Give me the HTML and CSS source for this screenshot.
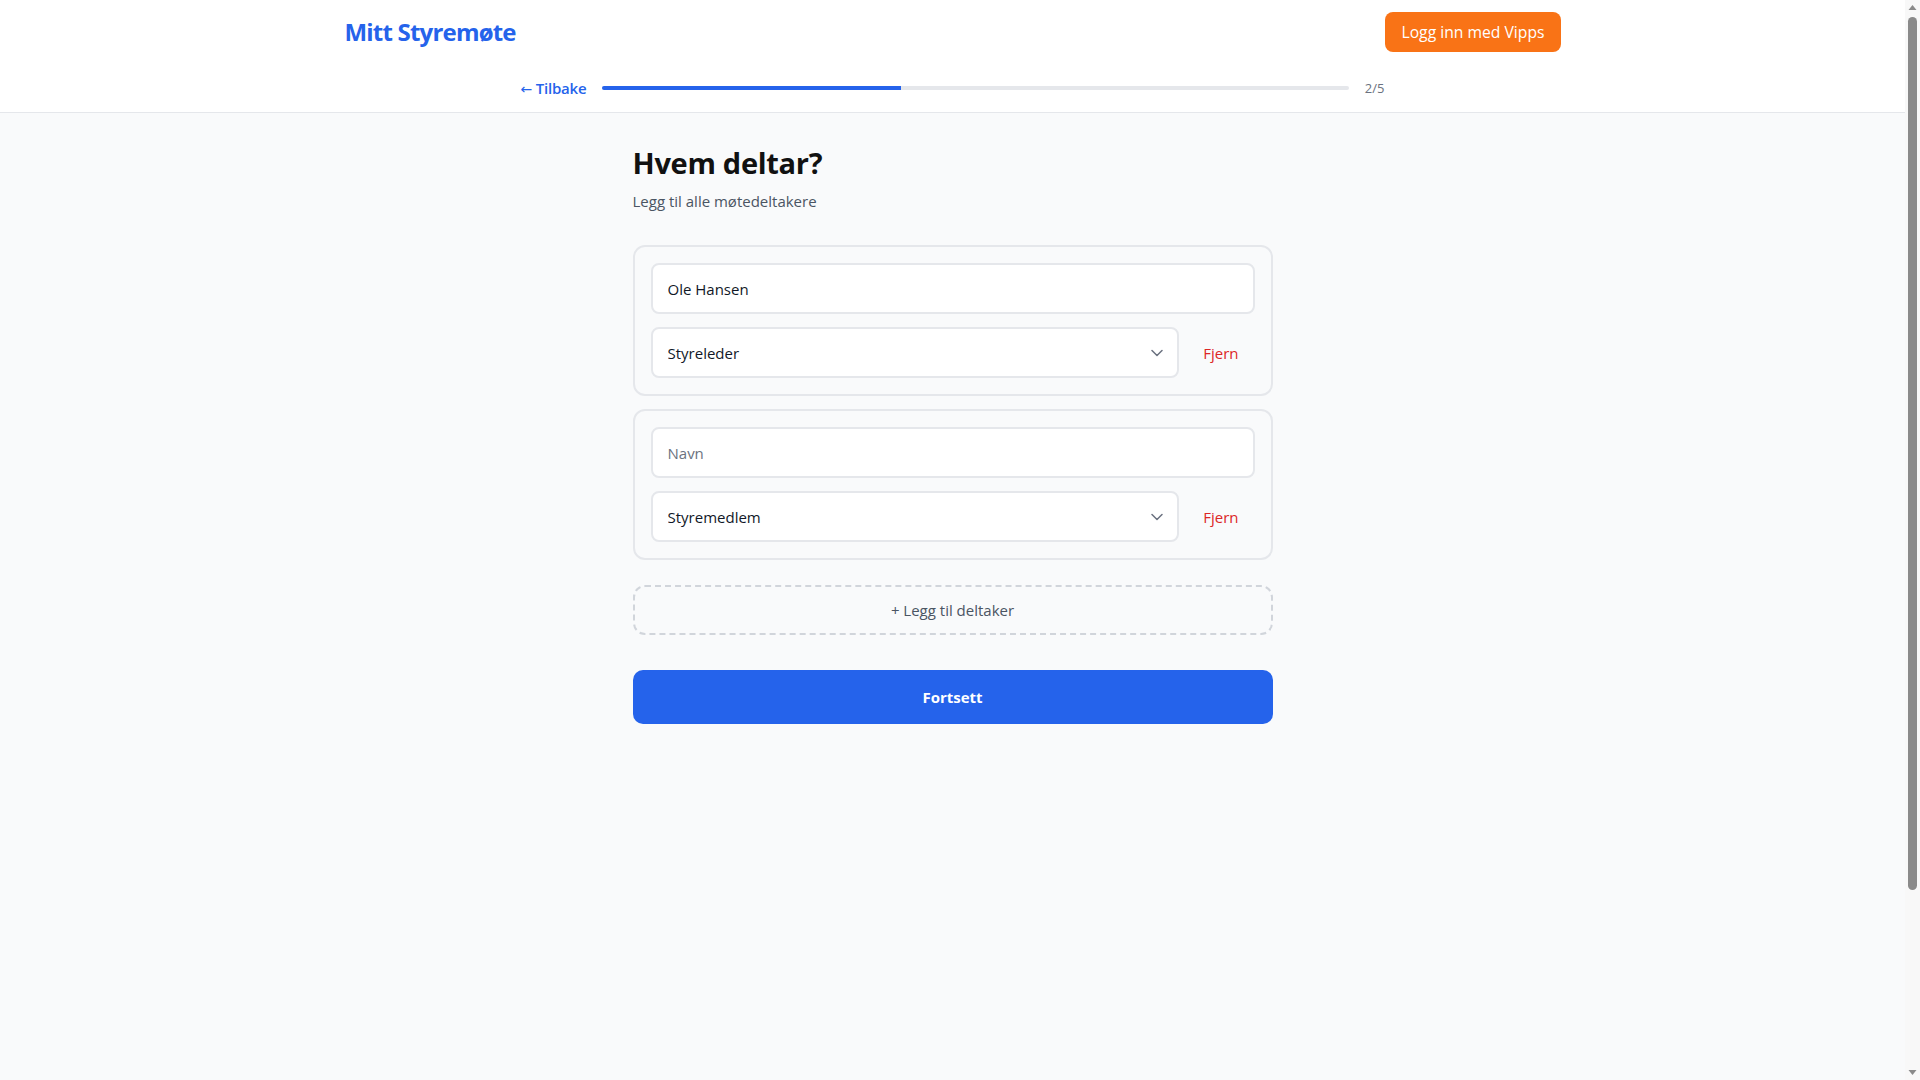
FILE: index.html
```html
<!DOCTYPE html>
<html lang="no">
<head>
<meta charset="utf-8">
<title>Mitt Styremøte</title>
<link rel="stylesheet" href="styles.css">
</head>
<body>
<header class="site-header">
  <div class="topbar">
    <a class="logo" href="#">Mitt Styremøte</a>
    <button class="vipps-btn" type="button">Logg inn med Vipps</button>
  </div>
  <div class="progress-row">
    <a class="back-link" href="#"><span class="back-arrow">←</span> Tilbake</a>
    <div class="progress-track"><div class="progress-fill" style="width:40%"></div></div>
    <span class="step-count">2/5</span>
  </div>
</header>
<main class="main">
  <h1 class="title">Hvem deltar?</h1>
  <p class="subtitle">Legg til alle møtedeltakere</p>

  <div class="participants">
    <div class="card">
      <input class="field" type="text" value="Ole Hansen" placeholder="Navn">
      <div class="role-row">
        <div class="select-wrap">
          <select class="field select">
            <option selected>Styreleder</option>
            <option>Styremedlem</option>
            <option>Varamedlem</option>
          </select>
          <svg class="chevron" width="12" height="8" viewBox="0 0 12 8"><path d="M1 1.5l5 5 5-5" fill="none" stroke="#6b7280" stroke-width="1.5" stroke-linecap="round" stroke-linejoin="round"/></svg>
        </div>
        <button class="remove-btn" type="button">Fjern</button>
      </div>
    </div>
    <div class="card">
      <input class="field" type="text" value="" placeholder="Navn">
      <div class="role-row">
        <div class="select-wrap">
          <select class="field select">
            <option>Styreleder</option>
            <option selected>Styremedlem</option>
            <option>Varamedlem</option>
          </select>
          <svg class="chevron" width="12" height="8" viewBox="0 0 12 8"><path d="M1 1.5l5 5 5-5" fill="none" stroke="#6b7280" stroke-width="1.5" stroke-linecap="round" stroke-linejoin="round"/></svg>
        </div>
        <button class="remove-btn" type="button">Fjern</button>
      </div>
    </div>
  </div>

  <button class="add-btn" type="button">+ Legg til deltaker</button>
  <button class="continue-btn" type="button">Fortsett</button>
</main>

<div class="fake-scrollbar" aria-hidden="true">
  <svg class="sb-arrow" width="15" height="15" viewBox="0 0 15 15"><path d="M3.5 10h8l-4-5z" fill="#8a8a8a"/></svg>
  <div class="sb-track"><div class="sb-thumb"></div></div>
  <svg class="sb-arrow" width="15" height="15" viewBox="0 0 15 15"><path d="M3.5 5h8l-4 5z" fill="#8a8a8a"/></svg>
</div>
</body>
</html>
```
FILE: styles.css
```css
* { box-sizing: border-box; }
html, body { margin: 0; padding: 0; }
body {
  font-family: "Open Sans", sans-serif;
  background: #f9fafb;
  color: #111827;
  font-size: 16px;
  line-height: 24px;
  padding-right: 15px;
}
.site-header {
  background: #ffffff;
  border-bottom: 1px solid #e5e7eb;
}
.topbar {
  max-width: 1280px;
  margin: 0 auto;
  padding: 12px 32px;
  display: flex;
  align-items: center;
  justify-content: space-between;
}
.logo {
  color: #2563eb;
  font-size: 24px;
  line-height: 32px;
  font-weight: 700;
  text-decoration: none;
  letter-spacing: -0.8px;
}
.vipps-btn {
  background: #f97316;
  color: #ffffff;
  border: none;
  border-radius: 8px;
  height: 40px;
  padding: 0 16px;
  font: inherit;
  font-size: 15.7px;
  cursor: pointer;
}
.progress-row {
  max-width: 896px;
  height: 48px;
  margin: 0 auto;
  padding: 0 16px;
  display: flex;
  align-items: center;
  gap: 16px;
}
.back-link {
  color: #2563eb;
  font-size: 15px;
  line-height: 24px;
  font-weight: 600;
  text-decoration: none;
  white-space: nowrap;
  letter-spacing: -0.2px;
}
.back-arrow {
  font-family: "DejaVu Sans", sans-serif;
  font-weight: 400;
  font-size: 14px;
  line-height: 1;
}
.progress-track {
  flex: 1;
  height: 4px;
  background: #e5e7eb;
  border-radius: 2px;
  overflow: hidden;
}
.progress-fill {
  height: 100%;
  background: #2563eb;
}
.step-count {
  color: #6b7280;
  font-size: 13px;
}
.main {
  max-width: 672px;
  margin: 0 auto;
  padding: 32px 16px;
  min-height: 1181px;
}
.title {
  margin: 0;
  font-size: 29px;
  line-height: 36px;
  font-weight: 700;
  color: #111111;
  letter-spacing: -0.3px;
}
.subtitle {
  margin: 8px 0 0;
  color: #4b5563;
  font-size: 15px;
}
.participants {
  margin-top: 32px;
  display: flex;
  flex-direction: column;
  gap: 13px;
}
.card {
  border: 2px solid #e5e7eb;
  border-radius: 12px;
  padding: 16px;
  display: flex;
  flex-direction: column;
  gap: 13px;
}
.field {
  width: 100%;
  height: 51px;
  border: 2px solid #e5e7eb;
  border-radius: 8px;
  background: #ffffff;
  padding: 0 15px;
  font: inherit;
  font-size: 15px;
  color: #111827;
  outline: none;
}
.field::placeholder { color: #6b7280; }
.role-row {
  display: flex;
  align-items: center;
  gap: 8px;
}
.select-wrap {
  position: relative;
  flex: 1;
}
.select {
  appearance: none;
  -webkit-appearance: none;
  display: block;
}
.chevron {
  position: absolute;
  right: 16px;
  top: 50%;
  margin-top: -4px;
  pointer-events: none;
}
.remove-btn {
  background: none;
  border: none;
  color: #dc2626;
  font: inherit;
  font-size: 15px;
  padding: 0 16px;
  cursor: pointer;
}
.add-btn {
  display: block;
  width: 100%;
  margin-top: 25px;
  height: 50px;
  background: transparent;
  border: 2px dashed #d1d5db;
  border-radius: 12px;
  color: #4b5563;
  font: inherit;
  font-size: 15px;
  cursor: pointer;
}
.continue-btn {
  display: block;
  width: 100%;
  margin-top: 35px;
  height: 54px;
  background: #2563eb;
  border: none;
  border-radius: 10px;
  color: #ffffff;
  font: inherit;
  font-size: 15px;
  font-weight: 700;
  cursor: pointer;
}
.fake-scrollbar {
  position: fixed;
  top: 0;
  right: 0;
  width: 15px;
  height: 100vh;
  background: #f8f8f8;
  display: flex;
  flex-direction: column;
}
.sb-arrow { display: block; flex: none; }
.sb-track {
  flex: 1;
  padding: 2px 3px;
}
.sb-thumb {
  width: 9px;
  height: 873px;
  background: #8a8a8a;
  border-radius: 5px;
}
```
